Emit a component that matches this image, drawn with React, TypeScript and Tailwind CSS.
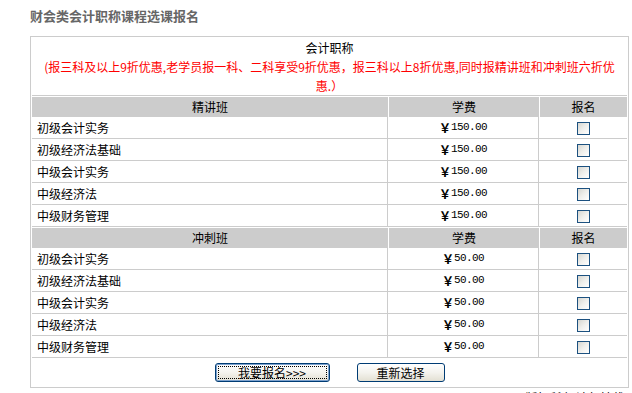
import React from "react";

type Course = { name: string; price: string };

const basic: Course[] = [
  { name: "初级会计实务", price: "150.00" },
  { name: "初级经济法基础", price: "150.00" },
  { name: "中级会计实务", price: "150.00" },
  { name: "中级经济法", price: "150.00" },
  { name: "中级财务管理", price: "150.00" },
];

const sprint: Course[] = [
  { name: "初级会计实务", price: "50.00" },
  { name: "初级经济法基础", price: "50.00" },
  { name: "中级会计实务", price: "50.00" },
  { name: "中级经济法", price: "50.00" },
  { name: "中级财务管理", price: "50.00" },
];

function CheckBox() {
  return (
    <span className="block w-[13px] h-[13px] border border-[#1c5180] bg-gradient-to-br from-[#d6d6d0] via-[#efefec] to-white" />
  );
}

function SectionHeader({ title }: { title: string }) {
  return (
    <div className="flex h-[20px] gap-px leading-[20px] text-center text-black">
      <div className="w-[356px] bg-[#cccccc]">{title}</div>
      <div className="w-[150px] bg-[#cccccc]">学费</div>
      <div className="flex-1 bg-[#cccccc]">报名</div>
    </div>
  );
}

function CourseRow({ c }: { c: Course }) {
  return (
    <div className="flex h-[22px] border-b border-[#cccccc] divide-x divide-[#cccccc] leading-[21px]">
      <div className="w-[356px] pl-[5px] text-black">{c.name}</div>
      <div className="w-[151px] flex items-center justify-center text-black">
        <span className="font-bold">￥</span>
        <span className="font-['Liberation_Mono',monospace] text-[11px] tracking-[-0.6px]">{c.price}</span>
      </div>
      <div className="flex-1 flex items-center justify-center pt-px">
        <CheckBox />
      </div>
    </div>
  );
}

function XpButton({
  label,
  width,
  focused,
}: {
  label: string;
  width: string;
  focused?: boolean;
}) {
  return (
    <button
      type="button"
      className={`${width} h-[19px] rounded-[3px] border border-[#003c74] bg-gradient-to-b from-white via-[#f4f3ee] to-[#e3e0d3] p-[2px] text-[12px] leading-none text-black ${
        focused ? "shadow-[inset_0_0_0_1px_#7da2ce]" : ""
      }`}
    >
      <span
        className={`flex h-full w-full items-center justify-center ${
          focused ? "border border-dotted border-black" : "border border-transparent"
        }`}
      >
        {label}
      </span>
    </button>
  );
}

export default function App() {
  return (
    <div className="w-[632px] h-[393px] overflow-hidden bg-white text-[12px] font-['Noto_Sans_CJK_SC',sans-serif]">
      <div className="h-[36px] pt-[8px] pl-[30px] text-[13px] leading-[16px] font-bold text-[#666666]">
        财会类会计职称课程选课报名
      </div>

      <div className="ml-[30px] w-[599px] border border-[#cccccc] p-px">
        <div className="h-[58px] border-b border-[#cccccc] text-center leading-[19px]">
          <div className="text-black">会计职称</div>
          <div className="whitespace-nowrap text-[#ff0000]">
            (报三科及以上9折优惠,老学员报一科、二科享受9折优惠，报三科以上8折优惠,同时报精讲班和冲刺班六折优
          </div>
          <div className="text-[#ff0000]">惠.）</div>
        </div>

        <div className="mt-px">
          <SectionHeader title="精讲班" />
          {basic.map((c) => (
            <CourseRow key={"b" + c.name} c={c} />
          ))}
        </div>

        <div className="mt-px">
          <SectionHeader title="冲刺班" />
          {sprint.map((c) => (
            <CourseRow key={"s" + c.name} c={c} />
          ))}
        </div>

        <div className="flex h-[28px] justify-center gap-[27px] pt-[5px]">
          <XpButton label="我要报名>>>" width="w-[115px]" focused />
          <XpButton label="重新选择" width="w-[88px]" />
        </div>
      </div>

      <div className="pr-[8px] pt-[2px] text-right leading-[16px] text-black">
        版权所有 请勿转载
      </div>
    </div>
  );
}
